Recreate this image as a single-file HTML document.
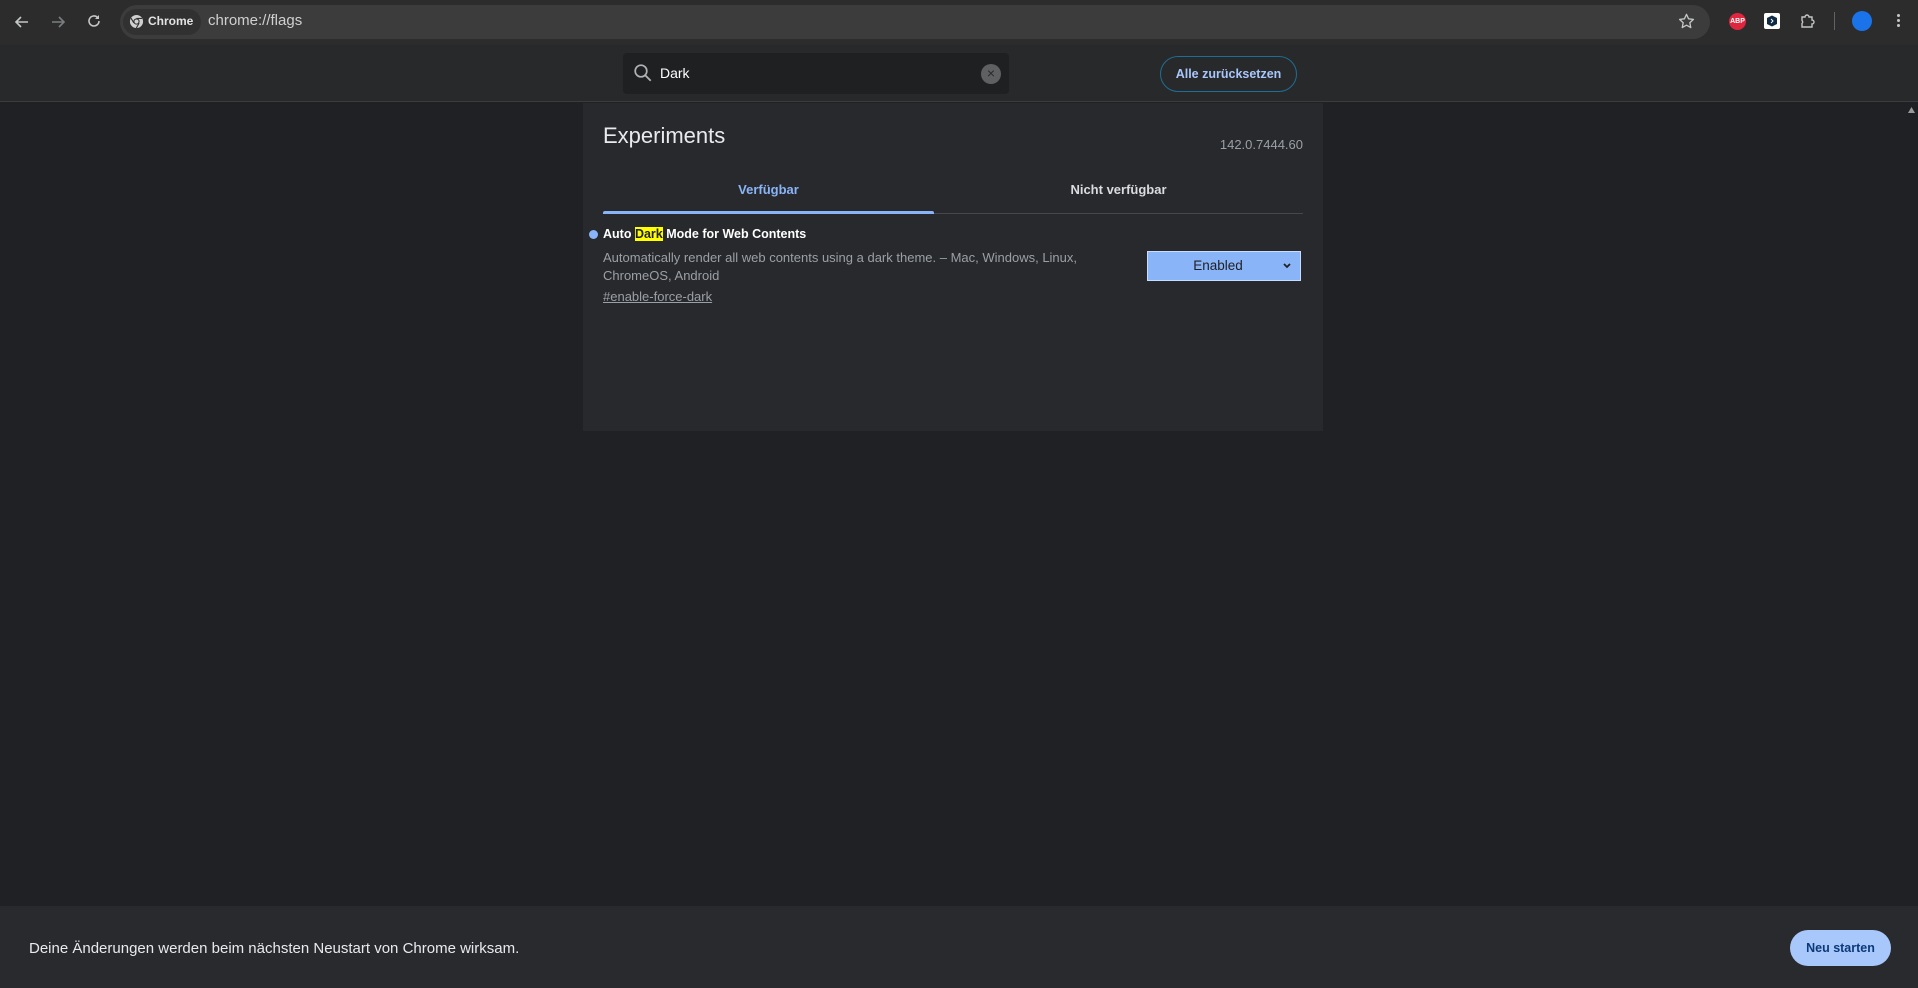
<!DOCTYPE html>
<html><head><meta charset="utf-8">
<style>
*{margin:0;padding:0;box-sizing:border-box}
html,body{width:1918px;height:988px;overflow:hidden;background:#202124;font-family:"Liberation Sans",sans-serif;color:#e8eaed;position:relative}
.abs{position:absolute}
#toolbar{left:0;top:0;width:1918px;height:45px;background:#2c2c2c}
#omni{left:120px;top:5px;width:1590px;height:34px;border-radius:17px;background:#3c3c3c}
#chip{left:123px;top:9px;width:78px;height:26px;border-radius:13px;background:#313131}
#header{left:0;top:45px;width:1918px;height:57px;background:#28292a;border-bottom:1px solid #3c3c3c}
#search{left:623px;top:53px;width:386px;height:41px;background:#1f2022;border-radius:4px}
#reset{left:1160px;top:56px;width:137px;height:36px;border:1px solid #1f6e95;border-radius:18px;color:#a8c7fa;font-size:12.5px;font-weight:bold;text-align:center;line-height:34px}
#panel{left:583px;top:103px;width:740px;height:328px;background:#28292c}
#bottom{left:0;top:906px;width:1918px;height:82px;background:#292a2d}
#restart{left:1790px;top:930px;width:101px;height:36px;border-radius:18px;background:#a8c7fa;color:#0b3a7a;font-size:12.5px;font-weight:bold;text-align:center;line-height:36px}
.t13{font-size:13px}
</style></head><body>
<div id="toolbar" class="abs"></div>
<div id="omni" class="abs"></div>
<div id="chip" class="abs"></div>
<svg class="abs" style="left:13px;top:13px" width="18" height="18" viewBox="0 0 18 18"><path d="M15 9H3M8 4L3 9l5 5" stroke="#c4c7c5" stroke-width="1.6" fill="none"/></svg>
<svg class="abs" style="left:49px;top:13px" width="18" height="18" viewBox="0 0 18 18"><path d="M3 9h12M10 4l5 5-5 5" stroke="#7b7e80" stroke-width="1.6" fill="none"/></svg>
<svg class="abs" style="left:85px;top:12px" width="18" height="18" viewBox="0 0 18 18"><path d="M14 9a5 5 0 1 1-1.5-3.6" stroke="#c4c7c5" stroke-width="1.6" fill="none"/><path d="M14 3v4h-4z" fill="#c4c7c5"/></svg>
<svg class="abs" style="left:129px;top:14px" width="15" height="15" viewBox="0 0 16 16"><circle cx="8" cy="8" r="7" fill="#d0d0d0"/><circle cx="8" cy="8" r="3.3" fill="#313131"/><circle cx="8" cy="8" r="2.2" fill="#d0d0d0"/><path d="M8 4.7h6M5.2 9.6L2.2 4.5M10.8 9.7l-3 5.2" stroke="#313131" stroke-width="1.2"/></svg>
<div class="abs" style="left:148px;top:14px;font-size:12px;font-weight:bold;color:#e3e3e3">Chrome</div>
<div class="abs" style="left:208px;top:12px;font-size:15px;color:#d0d0d0">chrome://flags</div>
<svg class="abs" style="left:1677px;top:12px" width="19" height="19" viewBox="0 0 20 20"><path d="M10 2.5l2.2 4.7 5.1.6-3.8 3.5 1 5.1L10 13.9l-4.5 2.5 1-5.1-3.8-3.5 5.1-.6z" stroke="#c4c7c5" stroke-width="1.4" fill="none" stroke-linejoin="round"/></svg>
<div class="abs" style="left:1729px;top:13px;width:17px;height:17px;border-radius:50%;background:#e0263f;color:#fff;font-size:7px;font-weight:bold;text-align:center;line-height:17px">ABP</div>
<div class="abs" style="left:1764px;top:13px;width:16px;height:16px;background:#fff;border-radius:2px"></div>
<svg class="abs" style="left:1766px;top:15px" width="12" height="12" viewBox="0 0 12 12"><path d="M6 0.5L11 3v6L6 11.5 1 9V3z" fill="#0f2b46"/><path d="M5 4l2 2-2 2" stroke="#fff" stroke-width="1" fill="none"/></svg>
<svg class="abs" style="left:1799px;top:12px" width="18" height="18" viewBox="0 0 18 18"><path d="M3 5h3a2 2 0 0 1 4 0h3v3a2 2 0 0 1 0 4v3H3v-3.5a2 2 0 0 0 0-3z" stroke="#c4c7c5" stroke-width="1.4" fill="none"/></svg>
<div class="abs" style="left:1834px;top:12px;width:1px;height:18px;background:#5f6368"></div>
<div class="abs" style="left:1852px;top:11px;width:20px;height:20px;border-radius:50%;background:#1a73e8"></div>
<div class="abs" style="left:1897px;top:14px;width:3px;height:3px;border-radius:50%;background:#c4c7c5;box-shadow:0 5px 0 #c4c7c5,0 10px 0 #c4c7c5"></div>

<div id="header" class="abs"></div>
<div id="search" class="abs"></div>
<svg class="abs" style="left:633px;top:63px" width="20" height="20" viewBox="0 0 20 20"><circle cx="8" cy="8" r="5.8" stroke="#b0b3b6" stroke-width="1.7" fill="none"/><path d="M12.2 12.2l5.5 5.5" stroke="#b0b3b6" stroke-width="1.8"/></svg>
<div class="abs" style="left:660px;top:65px;font-size:14px;color:#fff">Dark</div>
<div class="abs" style="left:981px;top:64px;width:20px;height:20px;border-radius:50%;background:#5f6062;color:#2a2a2a;font-size:14px;text-align:center;line-height:19px">×</div>
<div id="reset" class="abs">Alle zurücksetzen</div>

<div id="panel" class="abs"></div>
<div class="abs" style="left:603px;top:123px;font-size:22px;color:#e8eaed">Experiments</div>
<div class="abs t13" style="right:615px;top:137px;color:#9aa0a6">142.0.7444.60</div>
<div class="abs" style="left:603px;top:182px;width:331px;text-align:center;font-size:13px;font-weight:bold;color:#8ab4f8">Verfügbar</div>
<div class="abs" style="left:934px;top:182px;width:369px;text-align:center;font-size:13px;font-weight:bold;color:#dadce0">Nicht verfügbar</div>
<div class="abs" style="left:603px;top:213px;width:700px;height:1px;background:#45474a"></div>
<div class="abs" style="left:603px;top:211px;width:331px;height:3px;background:#8ab4f8;border-radius:2px 2px 0 0"></div>
<div class="abs" style="left:589px;top:230px;width:9px;height:9px;border-radius:50%;background:#8ab4f8"></div>
<div class="abs" style="left:603px;top:227px;font-size:12.5px;font-weight:bold;color:#fff">Auto <span style="background:#ffff00;color:#202124">Dark</span> Mode for Web Contents</div>
<div class="abs t13" style="left:603px;top:249px;width:480px;line-height:18px;color:#9aa0a6">Automatically render all web contents using a dark theme. – Mac, Windows, Linux, ChromeOS, Android</div>
<div class="abs t13" style="left:603px;top:289px;color:#9aa0a6;text-decoration:underline">#enable-force-dark</div>
<div class="abs" style="left:1147px;top:251px;width:154px;height:30px;background:#8ab4f8;border:1px solid #c8dcff"></div>
<div class="abs" style="left:1147px;top:258px;width:142px;text-align:center;font-size:13.5px;color:#202124">Enabled</div>
<svg class="abs" style="left:1282px;top:261px" width="10" height="10" viewBox="0 0 10 10"><path d="M2 3l3 3 3-3" stroke="#202124" stroke-width="1.8" fill="none"/></svg>

<div class="abs" style="left:1905px;top:103px;width:13px;height:803px;background:#202124"></div>
<svg class="abs" style="left:1907px;top:106px" width="9" height="8" viewBox="0 0 9 8"><path d="M4.5 1L8 7H1z" fill="#9a9a9a"/></svg>

<div id="bottom" class="abs"></div>
<div class="abs" style="left:29px;top:940px;font-size:15px;color:#e8eaed">Deine Änderungen werden beim nächsten Neustart von Chrome wirksam.</div>
<div id="restart" class="abs">Neu starten</div>
</body></html>
